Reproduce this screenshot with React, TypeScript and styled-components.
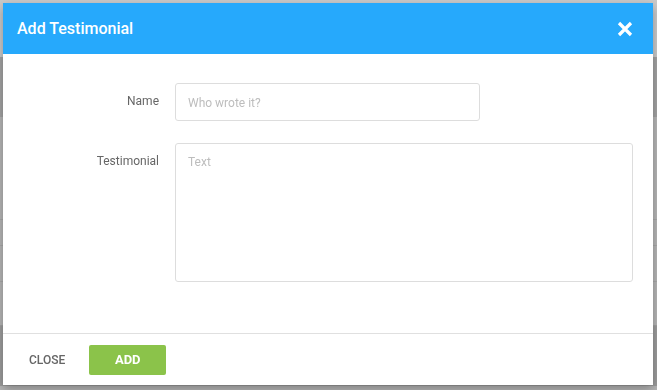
import React from "react";
import styled, { createGlobalStyle } from "styled-components";

const GlobalStyle = createGlobalStyle`
  html, body { margin: 0; padding: 0; }
  body {
    font-family: Roboto, "Liberation Sans", Arial, sans-serif;
    background: #b7b7b7;
    overflow: hidden;
  }
  * { box-sizing: border-box; }
`;

/* ---- the dimmed page behind the dialog ---- */
const Page = styled.div`
  width: 657px;
  height: 390px;
  display: flex;
  flex-direction: column;
  background: #b7b7b7;
`;

const PageTop = styled.div`
  height: 57px;
  background: #cacaca;
`;

const PageNav = styled.div`
  height: 60px;
  background: #a4a4a4;
`;

const PageContent = styled.div`
  flex: 1;
  display: flex;
  flex-direction: column;
`;

const PageRow = styled.div<{ $h: number; $line?: string; $bg?: string }>`
  height: ${(p) => p.$h}px;
  background: ${(p) => p.$bg || "#b7b7b7"};
  border-bottom: 1px solid ${(p) => p.$line || "transparent"};
`;

/* ---- dialog ---- */
const Overlay = styled.div`
  position: fixed;
  inset: 0;
  padding: 3px;
  display: flex;
  justify-content: flex-start;
  align-items: flex-start;
`;

const Dialog = styled.div`
  width: 650px;
  height: 382px;
  background: #ffffff;
  display: flex;
  flex-direction: column;
  box-shadow: 0 4px 10px rgba(0, 0, 0, 0.3);
`;

const Header = styled.div`
  height: 51px;
  flex: none;
  background: #26a9fc;
  display: flex;
  align-items: center;
  justify-content: space-between;
  padding: 0 20px 0 14px;
`;

const Title = styled.h2`
  margin: 0;
  color: #ffffff;
  font-size: 16px;
  font-weight: 500;
`;

const CloseIcon = styled.button`
  border: 0;
  background: transparent;
  padding: 0;
  width: 16px;
  height: 16px;
  display: flex;
  cursor: pointer;
`;

const Body = styled.div`
  flex: 1;
  display: grid;
  grid-template-columns: 156px 1fr;
  column-gap: 16px;
  row-gap: 22px;
  align-content: start;
  padding: 29px 20px 0 0;
`;

const Label = styled.label`
  text-align: right;
  font-size: 12px;
  line-height: 14px;
  color: #666666;
  padding-top: 11px;
`;

const fieldBase = `
  border: 1px solid #dddddd;
  border-radius: 3px;
  font-family: Roboto, "Liberation Sans", Arial, sans-serif;
  font-size: 12px;
  color: #333;
  outline: none;
  background: #fff;
  &::placeholder { color: #bdbdbd; }
`;

const TextInput = styled.input`
  ${fieldBase}
  width: 305px;
  height: 38px;
  padding: 1px 12px 0;
`;

const TextArea = styled.textarea`
  ${fieldBase}
  width: 100%;
  height: 139px;
  padding: 11px 12px;
  line-height: 14px;
  resize: none;
  display: block;
`;

const Footer = styled.div`
  height: 52px;
  flex: none;
  border-top: 1px solid #e0e0e0;
  display: flex;
  align-items: center;
  gap: 12px;
  padding: 0 14px;
`;

const FooterButton = styled.button<{ $primary?: boolean }>`
  border: 0;
  border-radius: 2px;
  height: 30px;
  font-family: Roboto, "Liberation Sans", Arial, sans-serif;
  text-transform: uppercase;
  cursor: pointer;
  padding: 0 12px;
  ${(p) =>
    p.$primary
      ? `
    width: 77px;
    background: #8bc34a;
    color: #ffffff;
    font-size: 13px;
    font-weight: 700;
  `
      : `
    background: transparent;
    color: #666666;
    font-size: 12px;
    font-weight: 500;
  `}
`;

export default function App() {
  return (
    <>
      <GlobalStyle />
      <Page>
        <PageTop />
        <PageNav />
        <PageContent>
          <PageRow $h={103} $line="#a9a9a9" />
          <PageRow $h={26} $line="#a9a9a9" />
          <PageRow $h={36} $line="#a9a9a9" />
          <PageRow $h={44} $line="#a3a3a3" />
          <PageRow $h={60} $bg="#9d9d9d" />
        </PageContent>
      </Page>
      <Overlay>
        <Dialog role="dialog" aria-label="Add Testimonial">
          <Header>
            <Title>Add Testimonial</Title>
            <CloseIcon aria-label="Close">
              <svg width="16" height="16" viewBox="0 0 16 16">
                <path
                  d="M2 2 L14 14 M14 2 L2 14"
                  stroke="#ffffff"
                  strokeWidth="3.2"
                  strokeLinecap="butt"
                  fill="none"
                />
              </svg>
            </CloseIcon>
          </Header>
          <Body>
            <Label htmlFor="t-name">Name</Label>
            <div>
              <TextInput id="t-name" placeholder="Who wrote it?" />
            </div>
            <Label htmlFor="t-text">Testimonial</Label>
            <div>
              <TextArea id="t-text" placeholder="Text" />
            </div>
          </Body>
          <Footer>
            <FooterButton>Close</FooterButton>
            <FooterButton $primary>Add</FooterButton>
          </Footer>
        </Dialog>
      </Overlay>
    </>
  );
}
